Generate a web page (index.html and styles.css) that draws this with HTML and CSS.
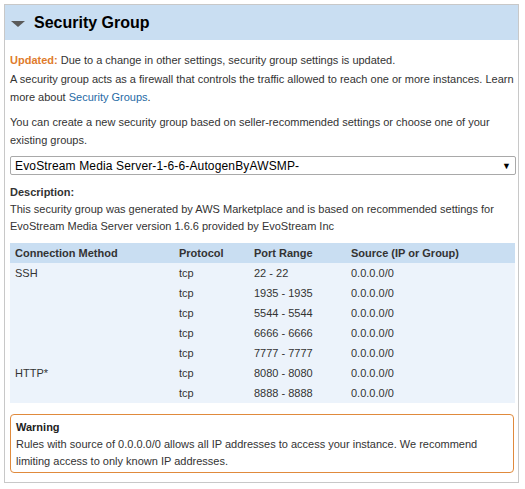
FILE: index.html
```html
<!DOCTYPE html>
<html>
<head>
<meta charset="utf-8">
<link rel="stylesheet" href="styles.css">
</head>
<body>
<div class="panel">
  <div class="panel-head">
    <span class="caret"></span>
    <h1 class="title">Security Group</h1>
  </div>
  <div class="panel-body">
    <p class="line"><span class="updated">Updated:</span> Due to a change in other settings, security group settings is updated.</p>
    <p class="para">A security group acts as a firewall that controls the traffic allowed to reach one or more instances. Learn more about <a class="link" href="#">Security Groups</a>.</p>
    <p class="para">You can create a new security group based on seller-recommended settings or choose one of your existing groups.</p>
    <div class="select">
      <span class="select-text">EvoStream Media Server-1-6-6-AutogenByAWSMP-</span>
      <span class="select-arrow">&#9660;</span>
    </div>
    <div class="desc">
      <div class="desc-title">Description:</div>
      <div class="desc-text">This security group was generated by AWS Marketplace and is based on recommended settings for EvoStream Media Server version 1.6.6 provided by EvoStream Inc</div>
    </div>
    <table class="rules">
      <thead>
        <tr><th class="c1">Connection Method</th><th class="c2">Protocol</th><th class="c3">Port Range</th><th class="c4">Source (IP or Group)</th></tr>
      </thead>
      <tbody>
        <tr><td>SSH</td><td>tcp</td><td>22 - 22</td><td>0.0.0.0/0</td></tr>
        <tr><td></td><td>tcp</td><td>1935 - 1935</td><td>0.0.0.0/0</td></tr>
        <tr><td></td><td>tcp</td><td>5544 - 5544</td><td>0.0.0.0/0</td></tr>
        <tr><td></td><td>tcp</td><td>6666 - 6666</td><td>0.0.0.0/0</td></tr>
        <tr><td></td><td>tcp</td><td>7777 - 7777</td><td>0.0.0.0/0</td></tr>
        <tr><td>HTTP*</td><td>tcp</td><td>8080 - 8080</td><td>0.0.0.0/0</td></tr>
        <tr><td></td><td>tcp</td><td>8888 - 8888</td><td>0.0.0.0/0</td></tr>
      </tbody>
    </table>
    <div class="warning">
      <div class="warning-title">Warning</div>
      <div class="warning-text">Rules with source of 0.0.0.0/0 allows all IP addresses to access your instance. We recommend limiting access to only known IP addresses.</div>
    </div>
  </div>
</div>
</body>
</html>
```
FILE: styles.css
```css
html, body {
  margin: 0;
  padding: 0;
  background: #ffffff;
}
body {
  padding: 4px 4px 0 4px;
  font-family: "Liberation Sans", Arial, sans-serif;
  font-size: 11px;
  color: #333333;
}
.panel {
  width: 515px;
  height: 479px;
  border: 1px solid #c8c8c8;
  box-sizing: border-box;
}
.panel-head {
  height: 35px;
  background: #c9def2;
  display: flex;
  align-items: center;
  padding-left: 6px;
  gap: 9px;
}
.caret {
  width: 0;
  height: 0;
  border-left: 7px solid transparent;
  border-right: 7px solid transparent;
  border-top: 6px solid #5a5a5a;
  margin-top: 2px;
}
.title {
  margin: 0;
  font-size: 16px;
  font-weight: bold;
  color: #000000;
}
.panel-body {
  padding: 11px 5px 0 5px;
}
.line, .para {
  margin: 0;
  line-height: 18px;
}
.para {
  margin-top: 1px;
  margin-right: -5px;
}
.para + .para {
  margin-top: 7px;
}
.updated {
  color: #e07b2c;
  font-weight: bold;
}
.link {
  color: #1f6aa5;
  text-decoration: none;
}
.select {
  margin-top: 7px;
  height: 19px;
  border: 1px solid #a9a9a9;
  border-radius: 2px;
  box-sizing: border-box;
  width: 506px;
  display: flex;
  align-items: center;
  justify-content: space-between;
  padding: 0 4px 0 4px;
  font-size: 12px;
  letter-spacing: 0.15px;
  color: #000;
}
.select-arrow {
  font-size: 9px;
  color: #000;
}
.desc {
  margin-top: 9px;
  line-height: 17px;
}
.desc-title {
  font-weight: bold;
}
.rules {
  margin-top: 8px;
  width: 505px;
  border-collapse: collapse;
  background: #ecf3fb;
}
.rules th {
  background: #c9def2;
  text-align: left;
  font-weight: bold;
  height: 20px;
  padding: 0 0 0 5px;
}
.rules td {
  height: 20px;
  padding: 0 0 0 5px;
}
.c1 { width: 159px; }
.c2 { width: 70px; }
.c3 { width: 92px; }
.warning {
  margin-top: 11px;
  width: 504px;
  box-sizing: border-box;
  border: 1px solid #e08a3c;
  border-radius: 4px;
  padding: 4px 5px 2px 5px;
  line-height: 17px;
}
.warning-title {
  font-weight: bold;
  color: #222;
}
```
